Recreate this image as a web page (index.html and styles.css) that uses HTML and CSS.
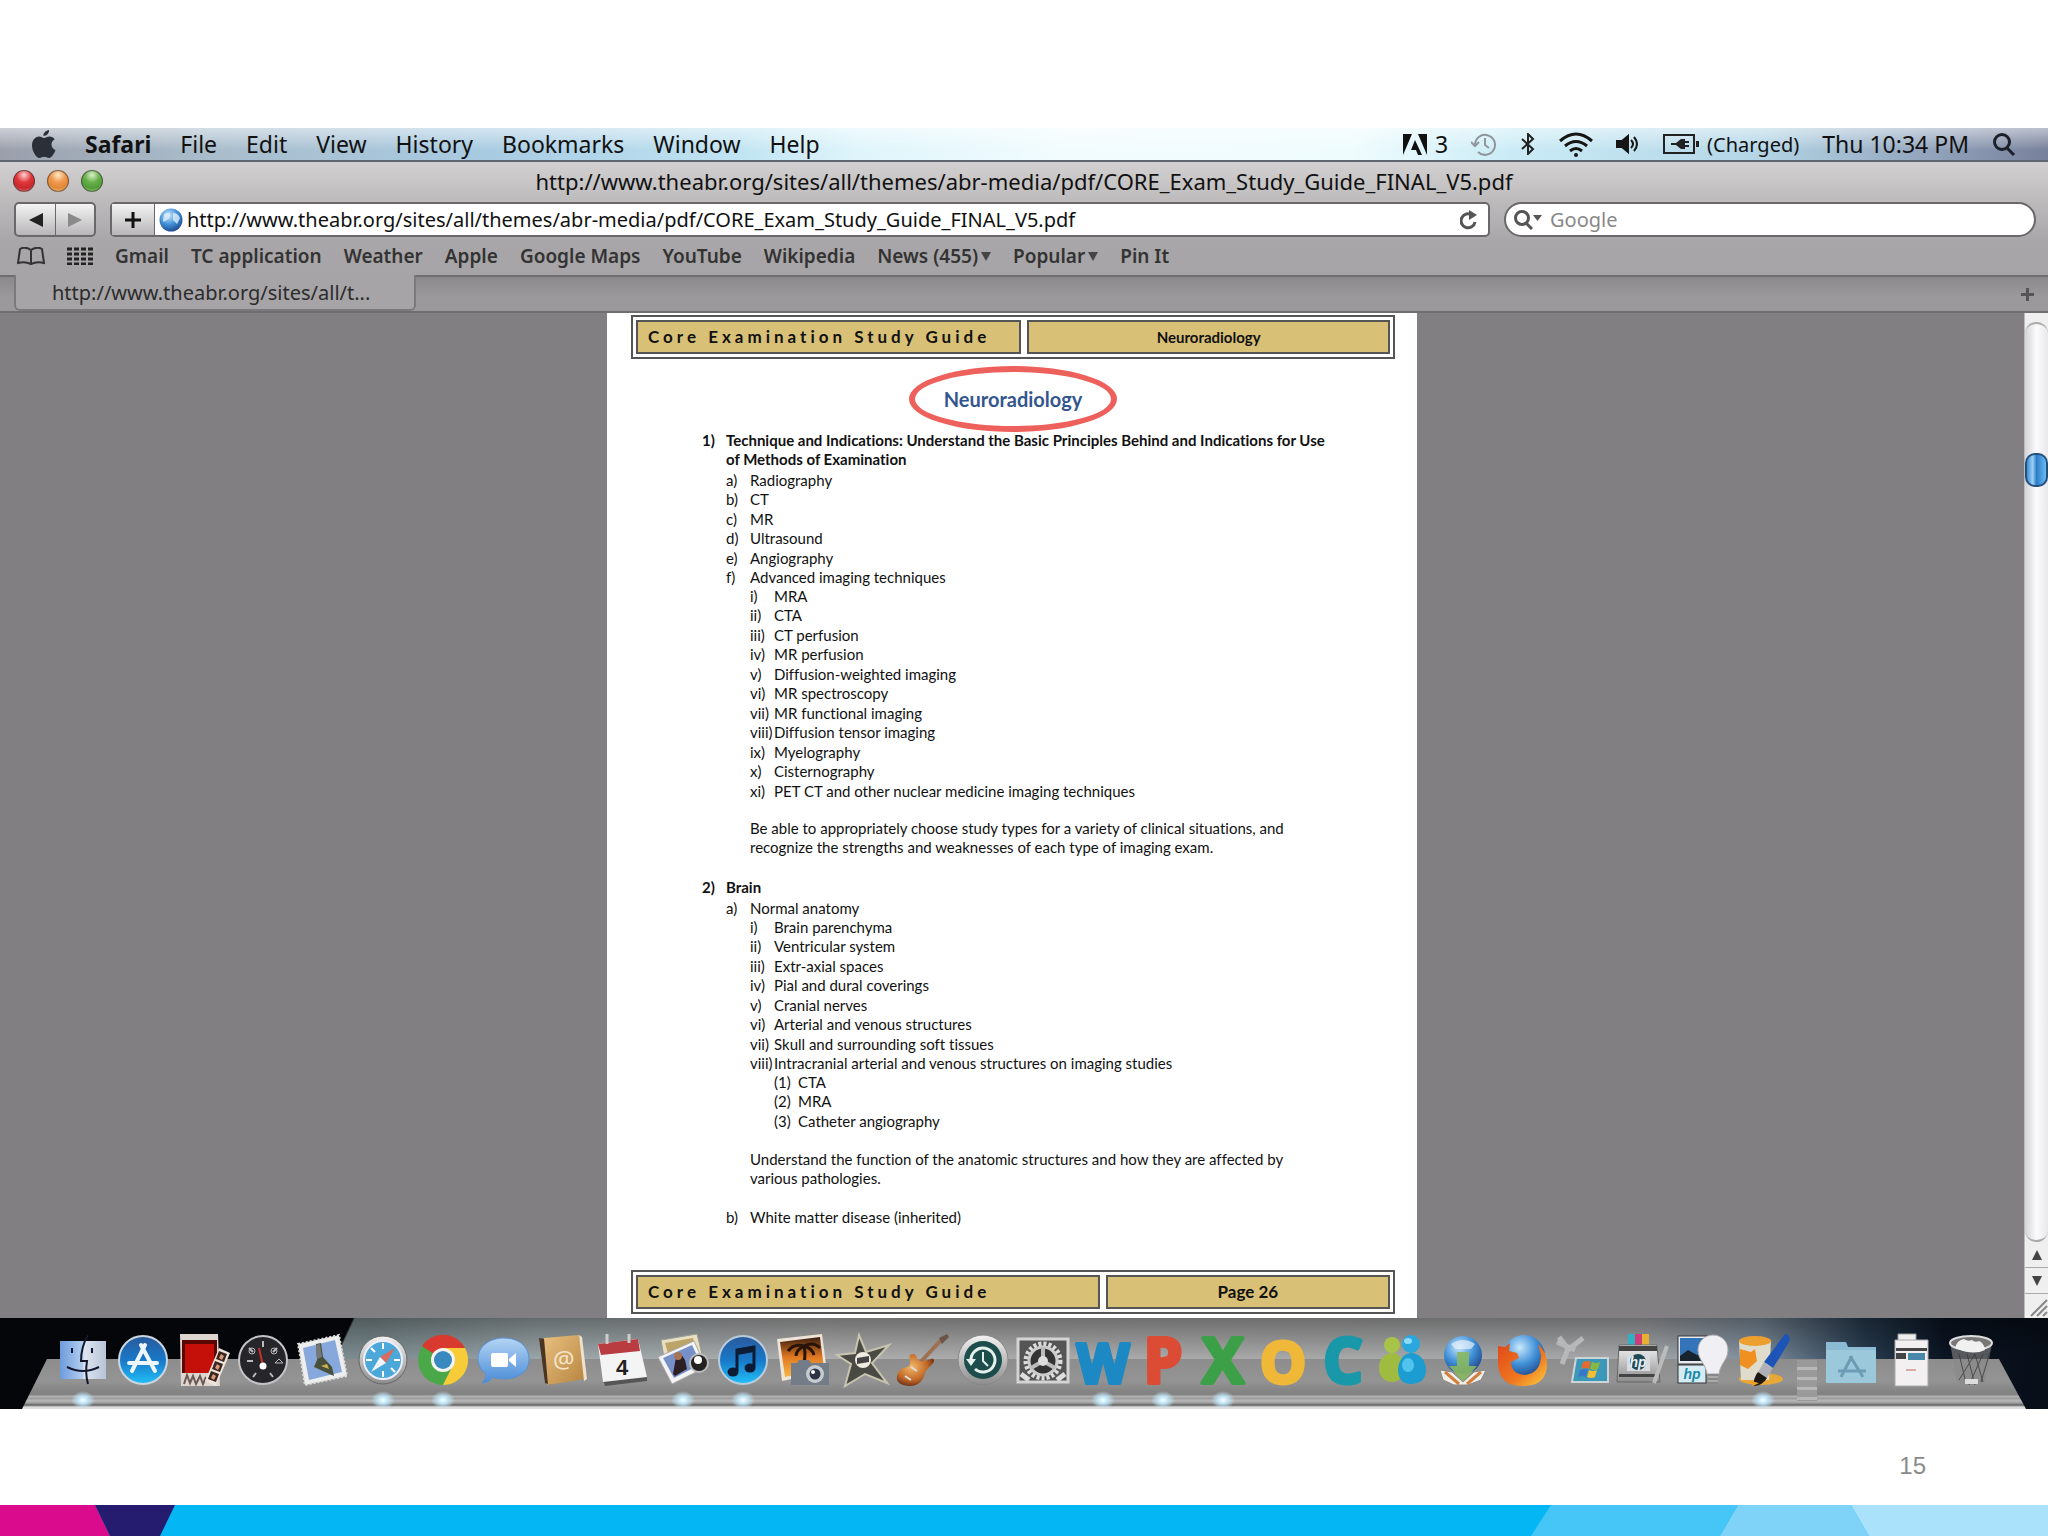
FILE: index.html
```html
<!DOCTYPE html>
<html lang="en">
<head>
  <meta charset="UTF-8" />
  <meta name="viewport" content="width=device-width, initial-scale=1.0" />
  <title>CORE Exam Study Guide</title>
  <link rel="stylesheet" href="styles.css">
</head>
<body>
  <!-- shared gradients -->
  <svg class="defs" width="0" height="0" aria-hidden="true">
    <defs>
      <linearGradient id="gBlue" x1="0" y1="0" x2="0" y2="1"><stop offset="0" stop-color="#2a5a9c"/><stop offset=".5" stop-color="#1878c8"/><stop offset="1" stop-color="#22c0f8"/></linearGradient>
      <linearGradient id="gSky" x1="0" y1="0" x2="0" y2="1"><stop offset="0" stop-color="#b4d4f4"/><stop offset="1" stop-color="#4a8cd8"/></linearGradient>
      <linearGradient id="gSilver" x1="0" y1="0" x2="0" y2="1"><stop offset="0" stop-color="#f2f2f2"/><stop offset="1" stop-color="#8c8c8c"/></linearGradient>
      <linearGradient id="gFinder" x1="0" y1="0" x2="1" y2="0"><stop offset="0" stop-color="#6c9cdc"/><stop offset=".5" stop-color="#b4cdf0"/><stop offset=".52" stop-color="#dfe6f2"/><stop offset="1" stop-color="#b8c4d8"/></linearGradient>
      <linearGradient id="gTan" x1="0" y1="0" x2="1" y2="1"><stop offset="0" stop-color="#e8c080"/><stop offset="1" stop-color="#b88440"/></linearGradient>
      <linearGradient id="gFire" x1="0" y1="0" x2="1" y2="1"><stop offset="0" stop-color="#e04818"/><stop offset=".6" stop-color="#f07820"/><stop offset="1" stop-color="#fcd040"/></linearGradient>
      <linearGradient id="gSunset" x1="0" y1="0" x2="0" y2="1"><stop offset="0" stop-color="#3a1c10"/><stop offset=".5" stop-color="#e07820"/><stop offset="1" stop-color="#f8b848"/></linearGradient>
      <radialGradient id="gGlobe" cx=".4" cy=".3" r=".8"><stop offset="0" stop-color="#c8e8fc"/><stop offset=".5" stop-color="#4090d8"/><stop offset="1" stop-color="#183878"/></radialGradient>
      <radialGradient id="gGuitar" cx=".4" cy=".4" r=".7"><stop offset="0" stop-color="#f4b868"/><stop offset=".6" stop-color="#c06828"/><stop offset="1" stop-color="#501c10"/></radialGradient>
    </defs>
  </svg>

  <div class="desktop">
    <!-- menu bar -->
    <nav class="menubar">
      <svg class="apple" viewBox="0 0 24 28"><path d="M17 0c.4 3-2.500 6-5.500 6C11 3 14 .4 17 0zM12 8c1.500 0 3-1.600 5.500-1.600 2 0 4 1 5.200 2.800-4.800 2.800-4 9 .8 10.800C22 24 19.500 28 17 28c-2 0-2.500-1.200-4.800-1.200S9.200 28 7.500 28C4 28 0 21 0 15.500c0-5.500 3.400-9 7-9C9.300 6.500 10.700 8 12 8z" fill="#2b2f38"/></svg>
      <button class="menu-item app-name">Safari</button>
      <button class="menu-item">File</button>
      <button class="menu-item">Edit</button>
      <button class="menu-item">View</button>
      <button class="menu-item">History</button>
      <button class="menu-item">Bookmarks</button>
      <button class="menu-item">Window</button>
      <button class="menu-item">Help</button>
      <div class="status">
        <span class="status-group">
          <svg width="24" height="21" viewBox="0 0 24 21"><path d="M0 0h9L0 21zM15 0h9v21zM12 6l7 15h-4l-2-5H8z" fill="#111"/></svg>
          <span>3</span>
        </span>
        <svg width="26" height="24" viewBox="0 0 26 24" fill="none" stroke="#8f979c" stroke-width="2"><path d="M4 13a10 10 0 1 1 3 7M14 6v7l4 3M0 10l4 4 4-4"/></svg>
        <svg width="16" height="22" viewBox="0 0 16 22" fill="none" stroke="#222" stroke-width="2"><path d="M2 6l11 10-5 5V1l5 5L2 16"/></svg>
        <svg width="34" height="25" viewBox="0 0 34 25" fill="none" stroke="#151515" stroke-width="3"><path d="M1 9q16-14 32 0M6 14q11-9 22 0M11 19q6-5 12 0"/><circle cx="17" cy="23" r="2" fill="#151515" stroke="none"/></svg>
        <svg width="24" height="20" viewBox="0 0 24 20" fill="none" stroke="#151515" stroke-width="2"><path d="M1 7h5l6-5v16l-6-5H1z" fill="#151515"/><path d="M15 6q4 4 0 8M18 3q6 7 0 14"/></svg>
        <span class="status-group">
          <svg width="36" height="20" viewBox="0 0 36 20"><rect x="1" y="1" width="30" height="18" fill="none" stroke="#222" stroke-width="2"/><path d="M33 7h3v6h-3zM8 9h5l5-4h4v10h-4l-5-4H8z" fill="#222"/><path d="M22 8h4M22 12h4" stroke="#222" stroke-width="2"/></svg>
          <span class="charge">(Charged)</span>
        </span>
        <span>Thu 10:34 PM</span>
        <svg width="24" height="24" viewBox="0 0 24 24" fill="none" stroke="#1c2028" stroke-width="3"><circle cx="10" cy="10" r="7.500"/><path d="M15 16l7 7"/></svg>
      </div>
    </nav>

    <!-- browser window -->
    <div class="window">
      <header class="titlebar">
        <div class="lights">
          <span class="light red"></span>
          <span class="light amber"></span>
          <span class="light green"></span>
        </div>
        <div class="window-title">http://www.theabr.org/sites/all/themes/abr-media/pdf/CORE_Exam_Study_Guide_FINAL_V5.pdf</div>
      </header>

      <div class="toolbar">
        <div class="nav-buttons">
          <button aria-label="Back"><svg width="14" height="14" viewBox="0 0 14 14"><path d="M14 0v14L0 7z" fill="#222"/></svg></button>
          <button aria-label="Forward"><svg width="14" height="14" viewBox="0 0 14 14"><path d="M0 0v14l14-7z" fill="#8a8a8a"/></svg></button>
        </div>
        <div class="address">
          <button class="add" aria-label="Add bookmark"><svg width="18" height="18" viewBox="0 0 18 18"><path d="M9 1v16M1 9h16" stroke="#111" stroke-width="3"/></svg></button>
          <svg class="globe" width="24" height="24" viewBox="0 0 24 24"><circle cx="12" cy="12" r="11.500" fill="url(#gGlobe)"/><path d="M5 6q5-3 6 0t-3 6-4 1zM14 5q5 0 7 5l-3 6-4-4z" fill="#dceefc" opacity=".8"/></svg>
          <input class="url" type="text" aria-label="Address" value="http://www.theabr.org/sites/all/themes/abr-media/pdf/CORE_Exam_Study_Guide_FINAL_V5.pdf" />
          <button class="reload" aria-label="Reload"><svg width="18" height="20" viewBox="0 0 18 20"><path d="M15 12a7 7 0 1 1-3-7" fill="none" stroke="#555" stroke-width="3"/><path d="M9 0l8 5-8 5z" fill="#555"/></svg></button>
        </div>
        <div class="search">
          <svg width="28" height="20" viewBox="0 0 28 20"><circle cx="8" cy="8" r="6.500" fill="none" stroke="#555" stroke-width="3"/><path d="M12 13l6 6" stroke="#555" stroke-width="3"/><path d="M19 5h9l-4.500 6z" fill="#555"/></svg>
          <input type="text" aria-label="Search" placeholder="Google" />
        </div>
      </div>

      <nav class="bookmarks">
        <svg width="28" height="18" viewBox="0 0 28 18" fill="none" stroke="#333" stroke-width="2"><path d="M14 3Q8-1 3 2L1 16q7-2 13 1 6-3 13-1L25 2q-5-3-11 1zM14 3v14"/></svg>
        <svg class="grid-icon" width="26" height="18" viewBox="0 0 26 18"><path d="M0 2h26M0 7h26M0 12h26M0 17h26" stroke="#222" stroke-width="3" stroke-dasharray="5 2"/></svg>
        <a href="#">Gmail</a>
        <a href="#">TC application</a>
        <a href="#">Weather</a>
        <a href="#">Apple</a>
        <a href="#">Google Maps</a>
        <a href="#">YouTube</a>
        <a href="#">Wikipedia</a>
        <a href="#" class="folder">News (455)</a>
        <a href="#" class="folder">Popular</a>
        <a href="#">Pin It</a>
      </nav>

      <div class="tabbar">
        <button class="tab">http://www.theabr.org/sites/all/t...</button>
        <button class="new-tab" aria-label="New tab"><svg width="13" height="13" viewBox="0 0 13 13"><path d="M6.500 0v13M0 6.500h13" stroke="#555" stroke-width="3"/></svg></button>
      </div>

      <div class="viewport">
        <main class="page">
          <div class="banner">
            <div class="banner-cell spaced">Core Examination Study Guide</div>
            <div class="banner-cell section-name">Neuroradiology</div>
          </div>

          <h1><span class="circled">Neuroradiology</span></h1>

          <section>
            <h2><span class="num">1)</span>Technique and Indications: Understand the Basic Principles Behind and Indications for Use of Methods of Examination</h2>
            <ol>
              <li><span class="num">a)</span>Radiography</li>
              <li><span class="num">b)</span>CT</li>
              <li><span class="num">c)</span>MR</li>
              <li><span class="num">d)</span>Ultrasound</li>
              <li><span class="num">e)</span>Angiography</li>
              <li><span class="num">f)</span>Advanced imaging techniques
                <ol>
                  <li><span class="num">i)</span>MRA</li>
                  <li><span class="num">ii)</span>CTA</li>
                  <li><span class="num">iii)</span>CT perfusion</li>
                  <li><span class="num">iv)</span>MR perfusion</li>
                  <li><span class="num">v)</span>Diffusion-weighted imaging</li>
                  <li><span class="num">vi)</span>MR spectroscopy</li>
                  <li><span class="num">vii)</span>MR functional imaging</li>
                  <li><span class="num">viii)</span>Diffusion tensor imaging</li>
                  <li><span class="num">ix)</span>Myelography</li>
                  <li><span class="num">x)</span>Cisternography</li>
                  <li><span class="num">xi)</span>PET CT and other nuclear medicine imaging techniques</li>
                </ol>
                <p class="note">Be able to appropriately choose study types for a variety of clinical situations, and<br>recognize the strengths and weaknesses of each type of imaging exam.</p>
              </li>
            </ol>
          </section>

          <section>
            <h2><span class="num">2)</span>Brain</h2>
            <ol>
              <li><span class="num">a)</span>Normal anatomy
                <ol>
                  <li><span class="num">i)</span>Brain parenchyma</li>
                  <li><span class="num">ii)</span>Ventricular system</li>
                  <li><span class="num">iii)</span>Extr-axial spaces</li>
                  <li><span class="num">iv)</span>Pial and dural coverings</li>
                  <li><span class="num">v)</span>Cranial nerves</li>
                  <li><span class="num">vi)</span>Arterial and venous structures</li>
                  <li><span class="num">vii)</span>Skull and surrounding soft tissues</li>
                  <li><span class="num">viii)</span>Intracranial arterial and venous structures on imaging studies
                    <ol>
                      <li><span class="num">(1)</span>CTA</li>
                      <li><span class="num">(2)</span>MRA</li>
                      <li><span class="num">(3)</span>Catheter angiography</li>
                    </ol>
                  </li>
                </ol>
                <p class="note">Understand the function of the anatomic structures and how they are affected by<br>various pathologies.</p>
              </li>
              <li><span class="num">b)</span>White matter disease (inherited)</li>
            </ol>
          </section>

          <div class="banner banner-bottom">
            <div class="banner-cell spaced">Core Examination Study Guide</div>
            <div class="banner-cell page-number">Page 26</div>
          </div>
        </main>

        <div class="scrollbar">
          <div class="track"><div class="thumb"></div></div>
          <button aria-label="Scroll up"><svg width="10" height="10" viewBox="0 0 10 10"><path d="M0 10h10L5 0z" fill="#444"/></svg></button>
          <button aria-label="Scroll down"><svg width="10" height="10" viewBox="0 0 10 10"><path d="M0 0h10L5 10z" fill="#444"/></svg></button>
          <svg class="grip" width="24" height="24" viewBox="0 0 24 24" stroke="#888" stroke-width="2"><path d="M6 22L22 6M12 22l10-10M18 22l4-4"/></svg>
        </div>
      </div>
    </div>

    <!-- dock -->
    <div class="dock">
      <button class="dock-item running" aria-label="Finder">
        <svg viewBox="0 0 52 52"><rect x="3" y="7" width="46" height="38" fill="url(#gFinder)"/><path d="M31 1q-7 12-7 26h6q-2 12 1 23" fill="none" stroke="#14182c" stroke-width="2"/><path d="M15 14v5M35 14v5M10 33q16 8 32 0" fill="none" stroke="#14182c" stroke-width="2"/></svg>
      </button>
      <button class="dock-item" aria-label="App Store">
        <svg viewBox="0 0 52 52"><circle cx="26" cy="26" r="24" fill="url(#gBlue)" stroke="#ccd6e0" stroke-width="2"/><path d="M28 11L15 37M24 11l14 26M12 29h28" stroke="#eef6ff" stroke-width="4" stroke-linecap="round"/></svg>
      </button>
      <button class="dock-item" aria-label="Photo Booth">
        <svg viewBox="0 0 52 52"><path d="M3 0h38l2 52H4z" fill="#ddd5d0"/><path d="M5 6h34v33H6z" fill="#c41008"/><path d="M5 6h34v4H5zM5 6h3v33H5zM37 6h3v33h-3z" fill="#5a0804"/><path d="M7 50l3-9 3 8 3-7 3 8 4-8 3 8 3-7" stroke="#6c5854" fill="none" stroke-width="2"/><path d="M42 14l11 5-14 33-11-5z" fill="#efe4d8"/><path d="M42 17l8 3-3 8-8-3zM38 27l8 3-3 8-8-3zM34 37l8 3-3 8-8-3z" fill="#3a2420"/><path d="M44 20l3 2-2 4-3-2zM40 30l3 2-2 4-3-2zM36 40l3 2-2 4-3-2z" fill="#d89a78"/></svg>
      </button>
      <button class="dock-item" aria-label="Dashboard">
        <svg viewBox="0 0 52 52"><circle cx="26" cy="26" r="24" fill="#26262a" stroke="#c4c4c8" stroke-width="2"/><path d="M26 7v6M10 27h6M16 43l3-4M36 43l-3-4M12 14l4 4M40 14l-4 4" stroke="#bbb" stroke-width="2"/><circle cx="15" cy="17" r="3" fill="none" stroke="#bbb"/><circle cx="37" cy="17" r="3" fill="none" stroke="#bbb"/><path d="M38 29l4-4 4 4z" fill="none" stroke="#bbb"/><path d="M26 32l-4-18" stroke="#c83028" stroke-width="2"/><circle cx="26" cy="32" r="3.500" fill="#fff"/></svg>
      </button>
      <button class="dock-item" aria-label="Mail">
        <svg viewBox="0 0 52 52"><path d="M1 10L42 1l8 41-42 9z" fill="#eee" stroke="#ddd" stroke-width="2" stroke-dasharray="2 2"/><path d="M6 14l32-8 7 32-33 8z" fill="#86a8dc"/><path d="M19 10l5-1 2 14 9 10 2 9-9-4-11-5 3-7z" fill="#48503a"/><path d="M19 11l4-1 2 13-5 2z" fill="#777"/><path d="M24 32l6-2 2 5z" fill="#d0b050"/></svg>
      </button>
      <button class="dock-item running" aria-label="Safari">
        <svg viewBox="0 0 52 52"><circle cx="26" cy="26" r="24" fill="url(#gSilver)" stroke="#666"/><circle cx="26" cy="26" r="19" fill="#4ca8d8" stroke="#eef" stroke-width="2"/><path d="M26 9v6M26 37v6M9 26h6M37 26h6M14 14l4 4M38 38l-4-4" stroke="#fff" stroke-width="2"/><path d="M38 14L29 29l-6-6z" fill="#d86a60"/><path d="M14 38l9-15 6 6z" fill="#eef4fa"/></svg>
      </button>
      <button class="dock-item running" aria-label="Chrome">
        <svg viewBox="0 0 52 52"><circle cx="26" cy="26" r="25" fill="#4ba848"/><path d="M26 26L5 12A25 25 0 0 1 48 14z" fill="#d83a30"/><path d="M26 14h22a25 25 0 0 1-22 37l12-24z" fill="#f8cc38"/><circle cx="26" cy="26" r="12" fill="#f4f4f0"/><circle cx="26" cy="26" r="9" fill="#3a88c0"/></svg>
      </button>
      <button class="dock-item" aria-label="iChat">
        <svg viewBox="0 0 52 52"><path d="M27 4c14 0 25 8 25 21S41 45 27 45c-5 0-9-1-11-2-3 4-6 6-11 6 3-3 4-6 4-9C4 36 1 31 1 25 1 12 13 4 27 4z" fill="url(#gSky)" stroke="#5a90d0"/><rect x="14" y="19" width="17" height="14" rx="2" fill="#fff"/><path d="M32 25l7-6v14l-7-6z" fill="#fff"/></svg>
      </button>
      <button class="dock-item" aria-label="Address Book">
        <svg viewBox="0 0 52 52"><path d="M2 4l6 1 6 46-6-2z" fill="#4a3424"/><path d="M7 4L42 1l5 44-36 6z" fill="url(#gTan)"/><path d="M42 1l3 2 5 42-3 2z" fill="#eee2cc"/><text x="16" y="34" class="icon-at">@</text></svg>
      </button>
      <button class="dock-item" aria-label="iCal">
        <svg viewBox="0 0 52 52"><path d="M6 46l44-4v5L8 52z" fill="#555"/><path d="M1 10l40-5 9 38-44 5z" fill="#f4f4f4"/><path d="M1 10l40-5 2 12-39 4z" fill="#b83c40"/><path d="M10 0v10M32 0v9" stroke="#ccc" stroke-width="3"/><text x="19" y="41" class="icon-date">4</text></svg>
      </button>
      <button class="dock-item running" aria-label="iPhoto">
        <svg viewBox="0 0 52 52"><path d="M4 6L40 0l6 24-38 6z" fill="#e8e0c0" stroke="#999"/><path d="M8 9l28-5 4 14-28 5z" fill="#bca468"/><path d="M1 23L37 7l12 26-34 17z" fill="#f4f4f4" stroke="#aaa"/><path d="M6 24l29-13 9 19-27 14z" fill="#7890c8"/><path d="M16 40l3-17 5-3 4 6 2 9-12 7z" fill="#2c2024"/><circle cx="21" cy="22" r="4" fill="#a87458"/><circle cx="42" cy="29" r="9" fill="#222" stroke="#bbb" stroke-width="2"/><circle cx="41" cy="26" r="4" fill="#fff"/></svg>
      </button>
      <button class="dock-item running" aria-label="iTunes">
        <svg viewBox="0 0 52 52"><circle cx="26" cy="26" r="24" fill="url(#gBlue)" stroke="#b8ccdc" stroke-width="2"/><path d="M20 37V16l17-3v20" fill="none" stroke="#0c1c34" stroke-width="3"/><path d="M20 15l17-3v6l-17 3z" fill="#0c1c34"/><ellipse cx="16" cy="38" rx="5.500" ry="4.500" fill="#0c1c34"/><ellipse cx="33" cy="34" rx="5.500" ry="4.500" fill="#0c1c34"/></svg>
      </button>
      <button class="dock-item" aria-label="Image Capture">
        <svg viewBox="0 0 52 52"><path d="M0 5L45 0l5 38-45 9z" fill="#eee4d8"/><path d="M3 8l40-5 4 32-39 8z" fill="url(#gSunset)"/><path d="M24 38q6-14 3-26M27 12q-10-3-16 5M27 12q10-5 16 2M27 12q-8 4-8 10M27 12q8 2 10 9" fill="none" stroke="#281408" stroke-width="3"/><path d="M14 29h6l2-3h10l2 3h18v22H14z" fill="#747c88"/><circle cx="38" cy="40" r="9" fill="#c8ccd0"/><circle cx="38" cy="40" r="5.500" fill="#2c3444"/><circle cx="36" cy="38" r="2" fill="#fff"/></svg>
      </button>
      <button class="dock-item" aria-label="iMovie">
        <svg viewBox="0 0 52 52"><path d="M22 1l7 17 23-7-17 18 15 20-22-9-20 12 6-22L0 21l18-2z" fill="#4a4a44" stroke="#c8c4b0" stroke-width="2"/><circle cx="26" cy="26" r="8" fill="#f0ece0"/><path d="M20 24l12-2v6l-12 2z" fill="#444"/></svg>
      </button>
      <button class="dock-item" aria-label="GarageBand">
        <svg viewBox="0 0 52 52"><path d="M18 34L46 4" stroke="#9c7050" stroke-width="4"/><path d="M42 4l8-4 2 3-7 7z" fill="#6a5648"/><path d="M15 20c5-1 4 5 8 7s13-5 14-1-8 8-9 13-5 13-15 13S-3 47 1 39s11-4 12-9-3-9 2-10z" fill="url(#gGuitar)"/><path d="M8 42l6 4M14 33l6 4" stroke="#ddd" stroke-width="2"/></svg>
      </button>
      <button class="dock-item" aria-label="Time Machine">
        <svg viewBox="0 0 52 52"><circle cx="26" cy="26" r="25" fill="url(#gSilver)" stroke="#888"/><circle cx="26" cy="26" r="19" fill="#1c4c4c"/><path d="M14 27a12 12 0 1 1 4 8" fill="none" stroke="#e4f0ec" stroke-width="3"/><path d="M9 25l5 7 5-7z" fill="#e4f0ec"/><path d="M26 18v9l5 5" fill="none" stroke="#e4f0ec" stroke-width="2"/></svg>
      </button>
      <button class="dock-item" aria-label="System Preferences">
        <svg viewBox="0 0 52 52"><rect x="1" y="5" width="50" height="43" fill="#555" stroke="#d4d4d4" stroke-width="3"/><circle cx="26" cy="27" r="17" fill="none" stroke="#ddd" stroke-width="5" stroke-dasharray="3 2"/><circle cx="26" cy="27" r="14" fill="#333" stroke="#ccc" stroke-width="3"/><path d="M26 27V13M26 27l12 7M26 27l-12 7" stroke="#bbb" stroke-width="4"/><circle cx="26" cy="27" r="5" fill="#ddd"/><path d="M4 40l8 6M48 40l-8 6" stroke="#ddd" stroke-width="5"/></svg>
      </button>
      <button class="dock-item running" aria-label="Word">
        <svg viewBox="0 0 52 52"><text x="26" y="49" class="icon-letter word">W</text></svg>
      </button>
      <button class="dock-item running" aria-label="PowerPoint">
        <svg viewBox="0 0 52 52"><text x="26" y="49" class="icon-letter powerpoint">P</text></svg>
      </button>
      <button class="dock-item running" aria-label="Excel">
        <svg viewBox="0 0 52 52"><text x="26" y="49" class="icon-letter excel">X</text></svg>
      </button>
      <button class="dock-item" aria-label="Outlook">
        <svg viewBox="0 0 52 52"><text x="26" y="49" class="icon-letter outlook">O</text></svg>
      </button>
      <button class="dock-item" aria-label="Communicator">
        <svg viewBox="0 0 52 52"><text x="26" y="49" class="icon-letter communicator">C</text></svg>
      </button>
      <button class="dock-item" aria-label="Messenger">
        <svg viewBox="0 0 52 52"><circle cx="15" cy="11" r="8" fill="#a8c448"/><path d="M15 19c8 0 12 8 12 15s-4 14-12 14S2 42 2 34s5-15 13-15z" fill="#a0bc40"/><circle cx="34" cy="10" r="9" fill="#28a8dc"/><path d="M34 19c9 0 15 8 15 17s-6 14-15 14-13-6-13-14 5-17 13-17z" fill="#1c9cd0"/><ellipse cx="31" cy="7" rx="4" ry="3" fill="#8cdcf8"/><ellipse cx="31" cy="31" rx="6" ry="7" fill="#50c4ec"/></svg>
      </button>
      <button class="dock-item" aria-label="Downloader">
        <svg viewBox="0 0 52 52"><circle cx="26" cy="21" r="19" fill="url(#gGlobe)"/><path d="M14 10q12-8 24 0l-4 5H18z" fill="#e4f0fa" opacity=".7"/><path d="M3 36l12 2 11 10 11-10 12-2-5 10-13 5H17L6 46z" fill="#f0f0e8" stroke="#888"/><path d="M8 38l14 12M44 38L30 50" stroke="#d08040" stroke-width="3"/><path d="M20 18h12v14h8L26 48 12 32h8z" fill="#88b860" opacity=".9"/></svg>
      </button>
      <button class="dock-item" aria-label="Firefox">
        <svg viewBox="0 0 52 52"><circle cx="27" cy="22" r="21" fill="url(#gGlobe)"/><path d="M1 12l7 1 5-4-1 8 8 2 2 5-8 4q0 12 14 13 16-2 16-20l-3-11q9 8 9 20 0 22-24 22T1 30z" fill="url(#gFire)"/></svg>
      </button>
      <button class="dock-item" aria-label="Remote Desktop">
        <svg viewBox="0 0 52 52"><path d="M2 3l9 12L5 30M26 4L11 16M0 8l18 8" fill="none" stroke="#b8b8b8" stroke-width="5"/><path d="M19 24h32v24H15z" fill="#3c98b8" stroke="#ccd4d8" stroke-width="2"/><path d="M26 28q5-2 8 0l-2 7q-4-2-8 0z" fill="#e06c30"/><path d="M35 28q4 2 8 0l-2 7q-4 2-8 0z" fill="#88b840"/><path d="M23 36q5-2 8 0l-2 7q-4-2-8 0z" fill="#3878c8"/><path d="M32 36q4 2 8 0l-2 7q-4 2-8 0z" fill="#f0c030"/></svg>
      </button>
      <button class="dock-item" aria-label="Printer">
        <svg viewBox="0 0 52 52"><path d="M11 0h7v12h-7z" fill="#30b0c0"/><path d="M18 0h7v12h-7z" fill="#d03c78"/><path d="M25 0h7v12h-7z" fill="#e8b030"/><path d="M2 11h38l3 37H0z" fill="url(#gSilver)" stroke="#666"/><path d="M2 12h38v5H2zM2 40h36v3H2z" fill="#444"/><rect x="10" y="20" width="23" height="17" fill="#d8dce0"/><circle cx="21" cy="28" r="8" fill="#204858"/><text x="21" y="33" class="icon-hp light-text">hp</text><path d="M50 12L37 49" stroke="#bbb" stroke-width="4"/></svg>
      </button>
      <button class="dock-item" aria-label="Photo Creations">
        <svg viewBox="0 0 52 52"><rect x="1" y="2" width="36" height="28" fill="#e8ecf0" stroke="#333"/><path d="M3 4h30v23H3z" fill="#3474b8"/><path d="M3 22l8-6 9 5 13-5v11H3z" fill="#18242c"/><rect x="1" y="31" width="28" height="18" fill="#d4ecf4" stroke="#333"/><text x="15" y="45" class="icon-hp">hp</text><path d="M36 1c9 0 15 7 15 15 0 10-8 14-9 24H30c-1-10-9-14-9-24C21 8 27 1 36 1z" fill="#f0f0f4" stroke="#aaa"/><path d="M31 40h10v10H31z" fill="#888"/><path d="M31 43h10M31 47h10" stroke="#ccc"/></svg>
      </button>
      <button class="dock-item running" aria-label="Paint">
        <svg viewBox="0 0 52 52"><ellipse cx="24" cy="45" rx="22" ry="6" fill="#e8a838"/><path d="M2 6h32l-2 40H4z" fill="#e0dccc"/><ellipse cx="18" cy="7" rx="16" ry="5" fill="#eca030"/><path d="M3 15l11 3 4-3 2 12-9 8-8-4z" fill="#f09020"/><path d="M48 0q6 1 4 8L36 34l-9-6z" fill="#1c54b8"/><path d="M27 28l9 6-6 10-9-6z" fill="#b0b0b8"/><path d="M21 38l9 6q-4 7-13 8-1-8 4-14z" fill="#1c1814"/><path d="M14 47l8 2-6 3z" fill="#f0a020"/></svg>
      </button>
      <span class="separator"></span>
      <button class="dock-item" aria-label="Applications">
        <svg viewBox="0 0 52 52"><path d="M1 8h20l2 5h28l-1 36H1z" fill="#8cbcd4"/><path d="M1 16h50v33H1z" fill="#9cc8dc"/><path d="M27 22L16 43M25 22l13 21M13 37h28" stroke="#6c9cb4" stroke-width="3"/></svg>
      </button>
      <button class="dock-item" aria-label="Documents">
        <svg viewBox="0 0 52 52"><path d="M13 0h18v8H13z" fill="#eee" stroke="#999"/><path d="M10 6h33v46H10z" fill="#f2f0f0" stroke="#aaa"/><path d="M11 14h31v3H11zM11 19h10v6H11z" fill="#444"/><path d="M23 19h17v7H23z" fill="#4888a8"/><path d="M21 36h10" stroke="#dba8a8" stroke-width="2"/></svg>
      </button>
      <button class="dock-item" aria-label="Trash">
        <svg viewBox="0 0 52 52"><path d="M5 9l7 39q14 6 28 0l7-39z" fill="#888" opacity=".6"/><path d="M14 20l7 29M22 20l8 31M30 20l8 28M38 20L24 51M30 20L14 46M45 18l-9 30" stroke="#333" opacity=".7"/><path d="M20 45h13v5H20z" fill="#ddd"/><ellipse cx="26" cy="9" rx="21" ry="7" fill="#777" stroke="#ddd" stroke-width="2"/><path d="M10 14q2-8 9-9 4 3 8 1 3 3 7 1 5 2 6 9-12 6-30-2z" fill="#f0f0f0"/></svg>
      </button>
    </div>
  </div>

  <footer class="slide-footer">
    <div class="slide-number">15</div>
    <svg class="stripe" viewBox="0 0 2048 31" preserveAspectRatio="none">
      <path d="M0 0h2048v31H0z" fill="#04b6f3"/>
      <path d="M0 0h95l15 31H0z" fill="#da0b8c"/>
      <path d="M95 0h80l-15 31h-50z" fill="#251c70"/>
      <path d="M1551 0h187l-18 31h-189z" fill="#46c5f7"/>
      <path d="M1738 0h113l18 31h-149z" fill="#80d3f8"/>
      <path d="M1851 0h197v31h-179z" fill="#aae1fb"/>
    </svg>
  </footer>
</body>
</html>
```
FILE: styles.css
```css
:root {
  --ui-font: "Noto Sans", "DejaVu Sans", sans-serif;
  --doc-font: Lato, "Open Sans", sans-serif;
  --gold: #d9c077;
  --chrome: #a6a4a6;
  --backdrop: #817f81;
}
* {
  box-sizing: border-box;
  margin: 0;
  padding: 0;
}
body {
  min-height: 100vh;
  display: flex;
  flex-direction: column;
  background-color: #fff;
  font-family: var(--ui-font);
  color: #111;
}
button {
  border: none;
  background: none;
  font: inherit;
  color: inherit;
}
svg {
  display: block;
  flex: none;
}
.defs {
  position: absolute;
}
.desktop {
  margin-top: 128px;
}

/* menu bar */
.menubar {
  display: flex;
  align-items: center;
  gap: 29px;
  height: 34px;
  padding: 0 32px;
  font-size: 23px;
  background: linear-gradient(180deg, rgba(255,255,255,.5), rgba(255,255,255,0) 70%), linear-gradient(90deg, #9b9fab 0, #a9bccb 10%, #a8cbe2 24%, #c0e4f2 36%, #dff5fb 42%, #f2fcfe 52%, #effcfe 66%, #c9ebf6 74%, #b3d5e6 86%, #8f9fb8 95%, #77809a 100%);
  border-bottom: 2px solid #5f666e;
}
.apple {
  width: 24px;
  height: 28px;
}
.menu-item {
  line-height: 32px;
}
.app-name {
  font-weight: bold;
}
.status {
  display: flex;
  align-items: center;
  gap: 23px;
  margin-left: auto;
}
.status-group {
  display: flex;
  align-items: center;
  gap: 8px;
}
.charge {
  font-size: 20px;
}

/* window frame */
.window {
  background: linear-gradient(180deg, #d2d0d0 0, #bcbabb 40px, #a8a6a8 80px, #a6a4a6 115px);
}
.titlebar {
  display: flex;
  align-items: center;
  height: 38px;
  padding: 0 13px;
}
.lights {
  display: flex;
  flex: 1;
  gap: 12px;
}
.titlebar::after {
  content: '';
  flex: 1;
}
.light {
  width: 22px;
  height: 22px;
  border-radius: 50%;
  border: 1px solid rgba(60, 50, 50, .6);
}
.red {
  background: radial-gradient(circle at 50% 20%, #ffd0d0 0, #e0383c 40%, #c8282c 70%, #f08888 100%);
}
.amber {
  background: radial-gradient(circle at 50% 20%, #ffe8c8 0, #f0984c 40%, #e08838 70%, #f8d888 100%);
}
.green {
  background: radial-gradient(circle at 50% 20%, #d8f0c8 0, #68b04c 40%, #509c38 70%, #a8dc88 100%);
}
.window-title {
  font-size: 22px;
  line-height: 30px;
  white-space: nowrap;
}
.toolbar {
  display: flex;
  gap: 14px;
  padding: 2px 12px 0 14px;
}
.nav-buttons {
  display: flex;
  border: 2px solid #6a686a;
  border-radius: 5px;
  background: linear-gradient(180deg, #f4f4f4, #b8b6b8);
}
.nav-buttons button {
  display: flex;
  align-items: center;
  justify-content: center;
  width: 39px;
  height: 31px;
}
.nav-buttons button + button {
  border-left: 1px solid #6a686a;
}
.address {
  display: flex;
  align-items: center;
  flex: 1334;
  height: 35px;
  border: 2px solid #6a686a;
  border-radius: 5px;
  background-color: #fff;
}
.add {
  display: flex;
  align-items: center;
  justify-content: center;
  width: 43px;
  height: 31px;
  border-right: 1px solid #6a686a;
  background: linear-gradient(180deg, #f4f4f4, #b8b6b8);
}
.globe {
  margin: 0 4px;
}
.toolbar input {
  flex: 1;
  min-width: 0;
  border: none;
  outline: none;
  background: none;
  font-family: var(--ui-font);
  font-size: 20px;
  color: #111;
}
.toolbar input::placeholder {
  color: #888;
  opacity: 1;
}
.reload {
  padding: 0 10px;
}
.search {
  display: flex;
  align-items: center;
  gap: 8px;
  flex: 0 1 532px;
  height: 35px;
  padding: 0 8px;
  border: 2px solid #6a686a;
  border-radius: 18px;
  background-color: #fff;
}
.bookmarks {
  display: flex;
  align-items: center;
  gap: 22px;
  height: 40px;
  padding-left: 17px;
  border-bottom: 2px solid #6f6d70;
  font-size: 19px;
  font-weight: 600;
  color: #333;
}
.bookmarks a {
  color: inherit;
  text-decoration: none;
  white-space: nowrap;
}
.folder::after {
  content: '';
  display: inline-block;
  margin-left: 3px;
  vertical-align: 2px;
  border: 5px solid transparent;
  border-top: 9px solid #444;
  border-bottom: none;
}
.tabbar {
  display: flex;
  align-items: center;
  justify-content: space-between;
  height: 36px;
  padding: 0 14px;
  background: linear-gradient(180deg, #8b898c, #9b999c 60%);
  border-bottom: 2px solid #6f6d70;
}
.tab {
  width: 402px;
  height: 36px;
  margin-top: -2px;
  padding: 0 36px;
  background-color: var(--chrome);
  border: 2px solid #7b797c;
  border-top: none;
  border-radius: 0 0 6px 6px;
  text-align: left;
  font-size: 20px;
  color: #2c2c2c;
}

/* document */
.viewport {
  display: flex;
  background-color: var(--backdrop);
}
.page {
  width: 810px;
  margin: 0 auto;
  padding: 2px 22px 4px 24px;
  background-color: #fff;
  font-family: var(--doc-font);
  font-size: 15px;
  line-height: 19px;
  font-variant-ligatures: none;
}
.banner {
  display: flex;
  gap: 6px;
  padding: 3px;
  border: 2px solid #555;
}
.banner-cell {
  flex: 385;
  padding: 0 10px;
  border: 2px solid #555;
  background-color: var(--gold);
  font-size: 17px;
  font-weight: bold;
  line-height: 30px;
}
.spaced {
  letter-spacing: 4px;
}
.section-name {
  flex: 361;
  font-size: 15px;
  text-align: center;
}
.banner-bottom {
  margin-top: 42px;
}
.banner-bottom .banner-cell {
  flex: 470;
}
.banner-bottom .page-number {
  flex: 278;
  text-align: center;
}
h1 {
  margin: 26px 0 18px;
  text-align: center;
  font-size: 20px;
  line-height: 28px;
  color: #34568f;
}
.circled {
  position: relative;
}
.circled::after {
  content: '';
  position: absolute;
  inset: -21px -35px;
  border: 6px solid #ee605b;
  border-radius: 50%;
}
section {
  padding: 0 60px 0 71px;
}
h2 {
  padding-left: 24px;
  font-size: 15px;
  line-height: 19px;
}
h2 .num {
  margin-left: -24px;
}
ol {
  list-style: none;
  padding-left: 24px;
}
h2 + ol {
  margin-top: 2px;
}
li li {
  white-space: nowrap;
}
li:nth-child(even) {
  padding-bottom: 1px;
}
.num {
  display: inline-block;
  width: 24px;
  white-space: nowrap;
}
.note {
  margin: 18px 0 20px;
  padding-left: 24px;
  white-space: nowrap;
}
.scrollbar {
  display: flex;
  flex-direction: column;
  width: 24px;
  background-color: #f0eff0;
  border-left: 1px solid #bbb;
}
.track {
  flex: 1;
  margin-top: 9px;
  padding-top: 129px;
  border-radius: 12px;
  border: 1px solid #aaa;
  border-width: 2px 0;
  background: linear-gradient(90deg, #d4d3d5, #fbfafc 50%, #e8e7e9);
}
.thumb {
  height: 34px;
  border: 2px solid #24507c;
  border-radius: 10px;
  background: linear-gradient(90deg, #4090d8, #9cd0f4 30%, #2c7cc8 50%, #6cbcf4);
}
.scrollbar button {
  display: flex;
  align-items: center;
  justify-content: center;
  height: 26px;
  border-bottom: 1px solid #aaa;
}

/* dock */
.dock {
  position: relative;
  display: flex;
  justify-content: center;
  height: 91px;
  padding: 16px 0 0 6px;
  background: linear-gradient(115deg, #04060a 0, #04060a 320px, transparent 322px), linear-gradient(180deg, rgba(0,0,0,.35), rgba(0,0,0,0) 40px), linear-gradient(90deg, #7c8c90 0, #7c8c90 18%, #98a4a8 26%, #acacac 40%, #a8a8a8 60%, #a4a6a8 80%, #7c8c9c 86%, #283c50 91%, #0a1422 95%, #080e18 100%);
}
/* glass shelf */
.dock::before {
  content: '';
  position: absolute;
  inset: 41px 22px 0;
  clip-path: polygon(25px 0, calc(100% - 27px) 0, 100% 100%, 0 100%);
  background: linear-gradient(180deg, #8d8d8d 0, #949494 22px, #828282 34px, #828282 36px, #b4b4b4 37px, #989898 40px, #bbb 41px, #a0a0a0 44px, #606060 46px, #ddd 48px);
}
.dock-item {
  position: relative;
  width: 60px;
  height: 75px;
  padding: 0 4px;
}
.dock-item svg {
  width: 52px;
  height: 52px;
  margin-bottom: 23px;
  overflow: visible;
}
.running::after {
  content: '';
  position: absolute;
  left: 18px;
  bottom: 0;
  width: 24px;
  height: 18px;
  background: radial-gradient(closest-side, #fff, #c4e8fc 35%, rgba(190,226,246,0));
}
.separator {
  position: relative;
  width: 28px;
}
.separator::after {
  content: '';
  position: absolute;
  inset: 26px 4px 8px;
  background: repeating-linear-gradient(180deg, #9a9a9a 0 7px, #b8b8b8 7px 10px);
}
.icon-letter {
  font-family: "Open Sans", sans-serif;
  font-weight: bold;
  font-size: 62px;
  text-anchor: middle;
  stroke-width: 4px;
  stroke-linejoin: round;
}
.word {
  font-size: 54px;
  fill: #1c88c4;
  stroke: #1c88c4;
}
.powerpoint {
  fill: #dc4c34;
  stroke: #dc4c34;
}
.excel {
  fill: #3ca048;
  stroke: #3ca048;
}
.outlook {
  font-size: 58px;
  fill: #f0b838;
  stroke: #f0b838;
}
.communicator {
  fill: #1898a8;
  stroke: #1898a8;
}
.icon-at {
  font: 24px var(--ui-font);
  fill: #f4e4c8;
}
.icon-date {
  font: bold 22px "Liberation Sans", sans-serif;
  fill: #222;
}
.icon-hp {
  font: italic bold 14px "Liberation Sans", sans-serif;
  text-anchor: middle;
  fill: #1888a8;
}
.light-text {
  fill: #e8f0f4;
}

/* slide footer */
.slide-footer {
  margin-top: auto;
}
.slide-number {
  padding: 0 122px 24px 0;
  text-align: right;
  font-family: "Liberation Sans", sans-serif;
  font-size: 24px;
  line-height: 30px;
  color: #8b8b8b;
}
.stripe {
  width: 100%;
  height: 31px;
}
```
